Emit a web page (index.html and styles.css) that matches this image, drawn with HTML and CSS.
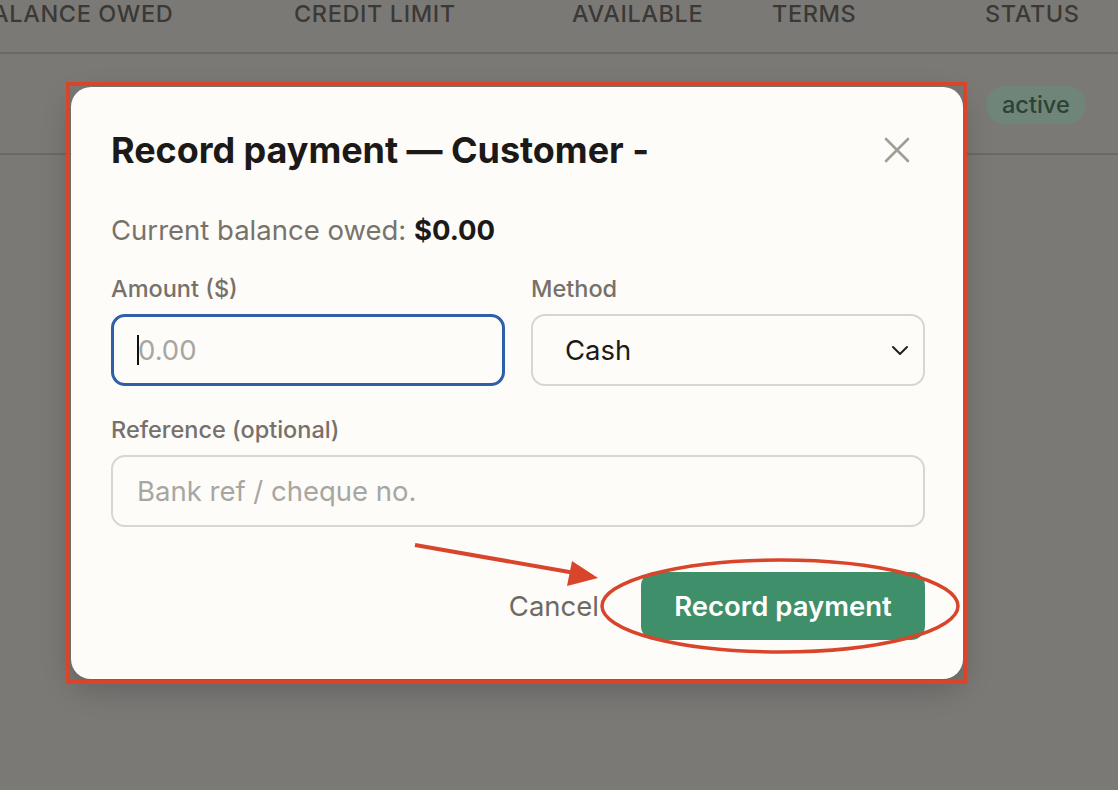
FILE: index.html
```html
<!DOCTYPE html>
<html>
<head>
<meta charset="utf-8">
<link rel="stylesheet" href="styles.css">
</head>
<body>
<div class="page">
  <div class="thead">
    <div class="th c1">BALANCE OWED</div>
    <div class="th c2">CREDIT LIMIT</div>
    <div class="th c3">AVAILABLE</div>
    <div class="th c4">TERMS</div>
    <div class="th c5">STATUS</div>
  </div>
  <div class="trow">
    <div class="td c1"></div>
    <div class="td c2"></div>
    <div class="td c3"></div>
    <div class="td c4"></div>
    <div class="td c5"><span class="badge">active</span></div>
  </div>
</div>

<div class="modal">
  <div class="modal-head">
    <h2 class="title">Record payment — Customer -</h2>
    <button class="close" aria-label="Close">
      <svg width="26" height="26" viewBox="0 0 26 26"><path d="M2 2 L24 24 M24 2 L2 24" stroke="#a19e95" stroke-width="2.6" stroke-linecap="round" fill="none"/></svg>
    </button>
  </div>
  <p class="balance">Current balance owed: <strong>$0.00</strong></p>
  <div class="grid">
    <div class="field">
      <label class="label">Amount ($)</label>
      <div class="input focus"><span class="caret"></span><span class="ph">0.00</span></div>
    </div>
    <div class="field">
      <label class="label">Method</label>
      <div class="input select"><span class="val">Cash</span>
        <svg class="chev" width="18" height="12" viewBox="0 0 18 12"><path d="M2 3 L9 10 L16 3" stroke="#222" stroke-width="2" fill="none" stroke-linecap="round" stroke-linejoin="round"/></svg>
      </div>
    </div>
    <div class="field wide">
      <label class="label">Reference (optional)</label>
      <div class="input"><span class="ph">Bank ref / cheque no.</span></div>
    </div>
  </div>
  <div class="actions">
    <button class="cancel">Cancel</button>
    <button class="primary">Record payment</button>
  </div>
</div>

<svg class="annot" width="1118" height="790" viewBox="0 0 1118 790">
  <rect x="68" y="84" width="897" height="598" fill="none" stroke="#d9452b" stroke-width="4"/>
  <line x1="415" y1="545" x2="575" y2="573" stroke="#d9452b" stroke-width="4"/>
  <polygon points="598,578 572,561 567,586" fill="#d9452b"/>
  <ellipse cx="780" cy="606" rx="178" ry="46" fill="none" stroke="#d9452b" stroke-width="3.5"/>
</svg>
</body>
</html>
```

FILE: styles.css
```css
* { box-sizing: border-box; }
html, body {
  margin: 0;
  padding: 0;
  width: 1118px;
  height: 790px;
  overflow: hidden;
  background: #7b7976;
  font-family: Inter, "Noto Sans", "Liberation Sans", sans-serif;
}
.page {
  width: 1118px;
}
.thead, .trow {
  display: flex;
  margin-left: -24px;
}
.thead {
  height: 54px;
  border-bottom: 2px solid #6b6966;
}
.trow {
  height: 101px;
  border-bottom: 2px solid #6b6966;
}
.c1, .c2, .c3, .c4, .c5 { flex-shrink: 0; }
.c1 { width: 318px; }
.c2 { width: 278px; }
.c3 { width: 200px; }
.c4 { width: 213px; }
.c5 { width: 133px; }
.th {
  font-size: 23.5px;
  font-weight: 500;
  letter-spacing: 0.6px;
  color: #3b3936;
  line-height: 27px;
  white-space: nowrap;
}
.td {
  display: flex;
  align-items: center;
}
.badge {
  display: inline-block;
  margin-left: 1px;
  margin-top: 2px;
  height: 38px;
  line-height: 38px;
  padding: 0 16px;
  border-radius: 19px;
  background: #6f8579;
  color: #2a4336;
  font-size: 23.5px;
  font-weight: 500;
}

.modal {
  position: absolute;
  left: 71px;
  top: 87px;
  width: 892px;
  height: 592px;
  background: #fdfcf9;
  border-radius: 20px;
  padding: 40px 38px 0 40px;
  box-shadow: 0 10px 30px rgba(0,0,0,0.2);
}
.modal-head {
  display: flex;
  align-items: center;
  justify-content: space-between;
  height: 46px;
}
.title {
  margin: 0;
  font-size: 36px;
  font-weight: 700;
  color: #1b1a18;
  letter-spacing: -0.05px;
}
.close {
  border: 0;
  background: none;
  padding: 0;
  margin-right: 15px;
  width: 26px;
  height: 26px;
  display: flex;
}
.balance {
  margin: 41px 0 0;
  font-size: 27.5px;
  line-height: 32px;
  color: #77736b;
}
.balance strong {
  color: #1b1a18;
  font-weight: 700;
}
.grid {
  display: grid;
  grid-template-columns: 394px 394px;
  column-gap: 26px;
  row-gap: 30px;
  margin-top: 29px;
}
.field.wide { grid-column: 1 / 3; }
.field { display: flex; flex-direction: column; gap: 11px; }
.label {
  font-size: 23.5px;
  line-height: 28px;
  font-weight: 500;
  color: #77716a;
}
.input {
  height: 72px;
  border: 2px solid #d9d6cf;
  border-radius: 14px;
  display: flex;
  align-items: center;
  padding: 0 24px;
  font-size: 27.5px;
  background: #fdfcf9;
}
.input.focus {
  border: 3px solid #2f5fa8;
  padding-left: 23px;
}
.caret {
  width: 2px;
  height: 30px;
  background: #111;
  margin-right: -1px;
}
.ph { color: #a7a6a3; }
.select {
  justify-content: space-between;
  padding-left: 32px;
  padding-right: 14px;
}
.val { color: #1b1a18; }
.actions {
  display: flex;
  justify-content: flex-end;
  align-items: center;
  gap: 42px;
  margin-top: 45px;
}
.cancel {
  border: 0;
  background: none;
  font-family: inherit;
  font-size: 27.5px;
  color: #6d6a64;
  padding: 0;
}
.primary {
  border: 0;
  background: #3f8f6a;
  color: #fff;
  font-family: inherit;
  font-size: 27.5px;
  font-weight: 600;
  height: 68px;
  width: 284px;
  border-radius: 14px;
}
.annot {
  position: absolute;
  left: 0;
  top: 0;
  pointer-events: none;
}
```
